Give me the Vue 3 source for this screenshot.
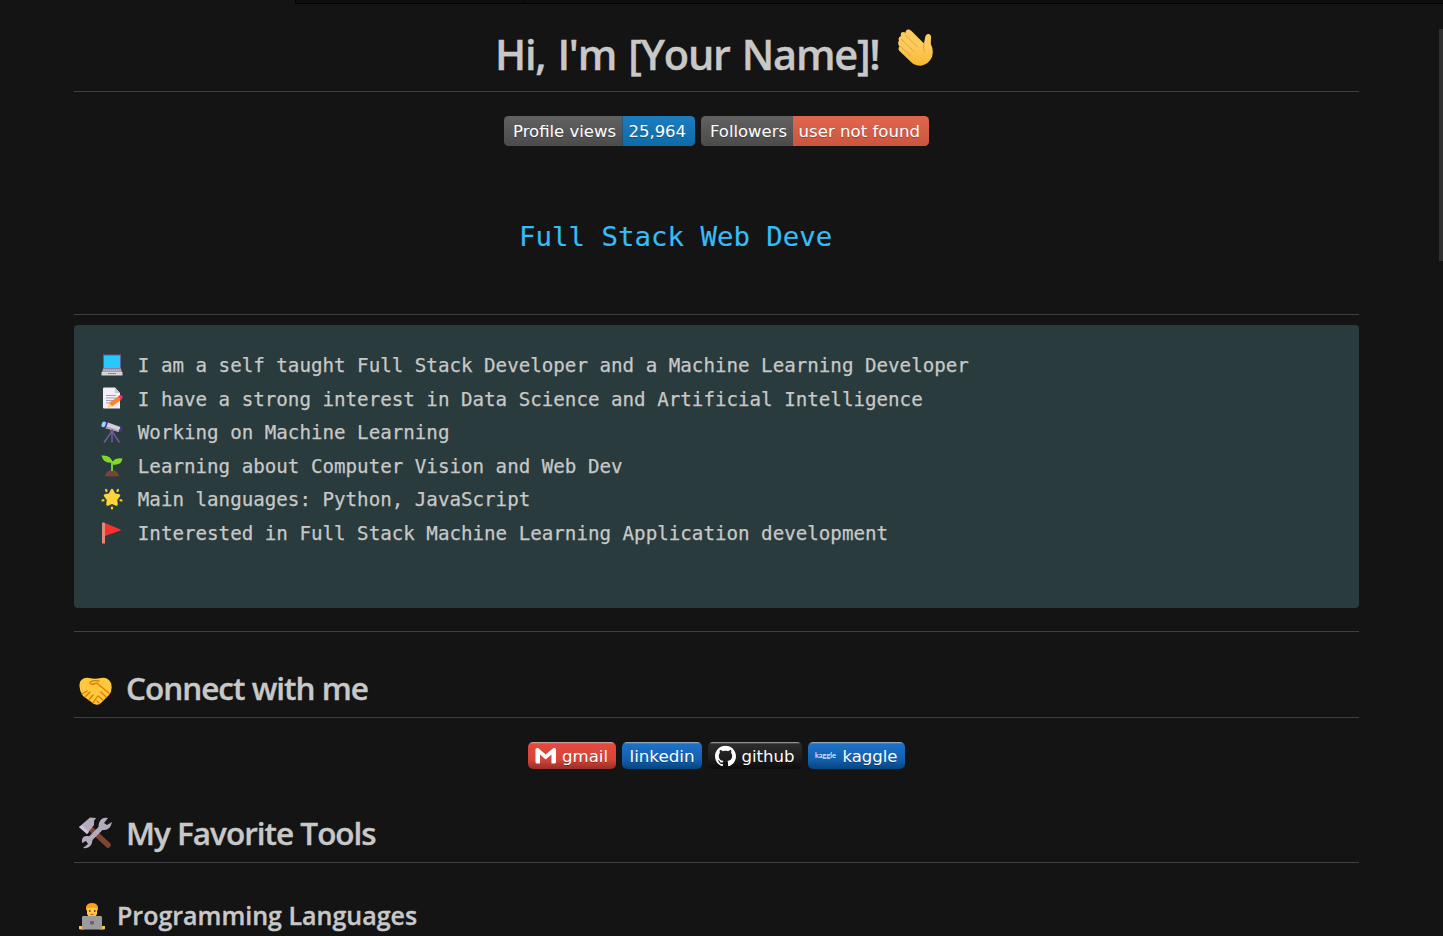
<script setup>
const facts = [
  { icon: 'laptop', text: 'I am a self taught Full Stack Developer and a Machine Learning Developer' },
  { icon: 'memo', text: 'I have a strong interest in Data Science and Artificial Intelligence' },
  { icon: 'scope', text: 'Working on Machine Learning' },
  { icon: 'plant', text: 'Learning about Computer Vision and Web Dev' },
  { icon: 'star', text: 'Main languages: Python, JavaScript' },
  { icon: 'flag', text: 'Interested in Full Stack Machine Learning Application development' },
]
const stats = [
  { label: 'Profile views', value: '25,964', width: 191, split: 118.5, lx: 9, lw: 103, vx: 124.5, vw: 57.5, top: '#1e7dbd', bottom: '#0d6ba8' },
  { label: 'Followers', value: 'user not found', width: 228, split: 92, lx: 9, lw: 77, vx: 97.5, vw: 121.5, top: '#e0674f', bottom: '#cb553e' },
]
const links = [
  { name: 'gmail', width: 88, x: 34, w: 46, top: '#e5493e', bottom: '#992e27', mid: '#d54439' },
  { name: 'linkedin', width: 80, x: 7.5, w: 65, top: '#1b70c8', bottom: '#07447f', mid: '#1260ad' },
  { name: 'github', width: 94, x: 33.5, w: 53, top: '#2b2b2b', bottom: '#0b0b0b', mid: '#1c1c1c' },
  { name: 'kaggle', width: 97, x: 34.5, w: 55, top: '#1b70c8', bottom: '#07447f', mid: '#1260ad' },
]
</script>

<template>
  <main class="page">
    <div class="tabs"><i></i><i></i></div>
    <article class="readme">
      <h1>
        <span>Hi, I'm [Your Name]!</span>
        <svg class="wave" viewBox="0 0 36 38">
          <defs>
            <linearGradient id="skin" x1="0" y1="0" x2="0" y2="1">
              <stop offset=".45" stop-color="#ffcb5f" /><stop offset="1" stop-color="#f5b72d" />
            </linearGradient>
          </defs>
          <path fill="url(#skin)" d="M3 7Q2 3 5.500 3Q6.500 3 7.500 4Q7.500 0 11 .5Q12.500 1 14 2.500L25.500 14Q26.500 14 26.500 11.500L27.500 7Q28.500 4.500 31 5Q33.500 5.500 33 9L32.800 15Q36 21 34 28Q31 35 23 36.800Q17 37 13 33L1.500 22Q-.5 19.500 1.500 17.500Q-1 14.500 1 11.500Q-.5 8.500 3 7Z" />
          <path fill="none" stroke="#e0a52f" stroke-width="1" stroke-linecap="round" d="M7.500 6L19.500 18M3.500 10.500L16 22.500M2.500 17.500L12 26.500M26 14.500Q24.500 18 26.500 23" />
        </svg>
      </h1>

      <div class="stats">
        <svg v-for="(b, i) in stats" :key="b.label" :width="b.width" height="30">
          <defs>
            <linearGradient :id="'sl' + i" x2="0" y2="1"><stop stop-color="#616161" /><stop offset="1" stop-color="#4b4b4b" /></linearGradient>
            <linearGradient :id="'sv' + i" x2="0" y2="1"><stop :stop-color="b.top" /><stop offset="1" :stop-color="b.bottom" /></linearGradient>
            <clipPath :id="'sc' + i"><rect :width="b.width" height="30" rx="4.500" /></clipPath>
          </defs>
          <g :clip-path="`url(#sc${i})`">
            <rect :width="b.split" height="30" :fill="`url(#sl${i})`" />
            <rect :x="b.split" :width="b.width - b.split" height="30" :fill="`url(#sv${i})`" />
          </g>
          <g class="badge-text">
            <text :x="b.lx" y="20.700" :textLength="b.lw" lengthAdjust="spacingAndGlyphs">{{ b.label }}</text>
            <text :x="b.vx" y="20.700" :textLength="b.vw" lengthAdjust="spacingAndGlyphs">{{ b.value }}</text>
          </g>
        </svg>
      </div>

      <div class="typing"><span>Full Stack Web Deve</span></div>
      <hr />

      <ul class="facts">
        <li v-for="f in facts" :key="f.icon">
          <svg class="emoji" viewBox="0 0 22 22">
            <template v-if="f.icon === 'laptop'">
              <path fill="#6a5b9b" d="M2 .5H20V15H2Z" /><path fill="#26c9fc" d="M3 1.500H19V14H3Z" /><path fill="#a7a0ad" d="M2 14.500H20L21 18H1Z" /><path fill="#d3d3d3" d="M.5 18H21.500V21.500H.5Z" /><path stroke="#c9c6cc" stroke-width="1" stroke-dasharray="1 1" d="M3 16H19" /><path stroke="#8d8d8d" d="M7 19.500H15" />
            </template>
            <template v-else-if="f.icon === 'memo'">
              <path fill="#f3eef8" d="M3 .5H14L19 6V21.500H3Q2 21.500 2 20.500V1.500Q2 .5 3 .5Z" /><path fill="#cdc4d6" d="M14 .5L19 6H14Z" /><path stroke="#a99cb5" d="M5 8.500H15M5 11H16M5 13.500H13M5 16H10" /><path fill="#ff822d" d="M8 16L17 9.500L20 13L11 19.500Z" /><path fill="#fcd27e" d="M8 16L11 19.500L6 21Z" /><path fill="#f92f60" d="M17 9.500Q19 7 21 8.500Q22.500 10.500 20 13Z" />
            </template>
            <template v-else-if="f.icon === 'scope'">
              <path fill="none" stroke="#6d5b9b" stroke-width="1.500" d="M10.500 11L3 21.500M11 11V21.500M11.500 11L18.500 21.500" /><path fill="#d3d0d5" d="M5.500 1L19.500 6L18 11L4 7Z" /><path fill="#a9a4ad" d="M4.500 5L18 9.500V11L4 7Z" /><path fill="#4b2fa0" d="M4 .5L7 1.500L5 7L2.500 6ZM19.500 6L21.500 7L20 11.500L17.500 10.500Z" /><ellipse cx="2.800" cy="3.500" rx="2" ry="3" fill="#8ed9f6" transform="rotate(20 3 3)" /><circle cx="11" cy="10" r="1.700" fill="#6d5b9b" />
            </template>
            <template v-else-if="f.icon === 'plant'">
              <path fill="#764538" d="M4 21.500Q5 15 11 15T18 21.500Z" /><path fill="none" stroke="#72cb28" stroke-width="2" d="M11 16V6" /><path fill="#83d927" d="M.5.5Q10-.5 11.500 7.500Q2.500 9 .5.5ZM11 9.500Q12 2 21.500 3.500Q20.500 11 11 9.500Z" />
            </template>
            <template v-else-if="f.icon === 'star'">
              <path fill="#ffd43b" stroke="#ffd43b" stroke-width="2.500" stroke-linejoin="round" d="M11 2L13.300 6.500L18 7.500L15 11.500L15.500 16.500L11 14.500L6.500 16.500L7 11.500L4 7.500L8.700 6.500Z" /><path stroke="#ffc928" stroke-width="2.200" stroke-linecap="round" d="M5 2L5.500 3M17 2L16.500 3M1.500 12.500L2.500 12.200M20.500 12.500L19.500 12.200M11 19.500V20.500" />
            </template>
            <template v-else>
              <path fill="#dc8b7b" d="M1 1Q2.500-.5 4 1V21.500H1Z" /><path fill="#f8312f" d="M4 1L19.500 7.500Q20 8 19.500 8.500L4 14Z" />
            </template>
          </svg>
          <span>{{ f.text }}</span>
        </li>
      </ul>
      <hr />

      <h2 class="connect">
        <svg viewBox="0 0 33 28">
          <path fill="#ffc83d" d="M1 5Q4 0 10 1Q16 2.500 22 1Q29 0 32 6Q34 13 30 18L22 26Q19 29 15 27L4 19Q-1 12 1 5Z" />
          <path fill="none" stroke="#d67d00" stroke-width="1.300" stroke-linecap="round" stroke-linejoin="round" d="M20 4Q15 3 11 5Q11 8 15 7Q18 5 20 8L30 16M3 17L8 14M6 20L11 15M10 23L14 18M14 26L18 20M22 15L27 20M19 19L24 23M18 24L20 26" />
        </svg>
        <span>Connect with me</span>
      </h2>

      <div class="links">
        <svg v-for="(b, i) in links" :key="b.name" :width="b.width" height="27">
          <defs>
            <linearGradient :id="'lk' + i" x2="0" y2="1">
              <stop stop-color="#b8b8b8" /><stop offset=".07" :stop-color="b.top" /><stop offset=".1" :stop-color="b.top" /><stop offset=".65" :stop-color="b.mid" /><stop offset="1" :stop-color="b.bottom" />
            </linearGradient>
          </defs>
          <rect :width="b.width" height="27" rx="5" :fill="`url(#lk${i})`" />
          <path v-if="b.name === 'gmail'" fill="#fff" d="M7.500 7.500Q7.500 6 9 6H10L17.700 12.500L25.500 6H26.500Q28 6 28 7.500V20Q28 21.500 26.500 21.500H23.500V12.500L17.700 17.500L12 12.500V21.500H9Q7.500 21.500 7.500 20Z" />
          <svg v-if="b.name === 'github'" x="7" y="3.500" width="21" height="21" viewBox="0 0 24 24">
            <path fill="#fff" d="M12 .297c-6.630 0-12 5.373-12 12 0 5.303 3.438 9.800 8.205 11.385.6.113.82-.258.82-.577 0-.285-.01-1.040-.015-2.040-3.338.724-4.042-1.610-4.042-1.610C4.422 18.070 3.633 17.700 3.633 17.700c-1.087-.744.084-.729.084-.729 1.205.084 1.838 1.236 1.838 1.236 1.070 1.835 2.809 1.305 3.495.998.108-.776.417-1.305.760-1.605-2.665-.3-5.466-1.332-5.466-5.930 0-1.310.465-2.380 1.235-3.220-.135-.303-.54-1.523.105-3.176 0 0 1.005-.322 3.300 1.230.96-.267 1.980-.399 3-.405 1.020.006 2.040.138 3 .405 2.280-1.552 3.285-1.230 3.285-1.230.645 1.653.24 2.873.12 3.176.765.840 1.230 1.910 1.230 3.220 0 4.610-2.805 5.625-5.475 5.920.42.360.810 1.096.810 2.220 0 1.606-.015 2.896-.015 3.286 0 .315.210.690.825.570C20.565 22.092 24 17.592 24 12.297c0-6.627-5.373-12-12-12" />
          </svg>
          <text v-if="b.name === 'kaggle'" class="tiny" x="7" y="16" textLength="21" lengthAdjust="spacingAndGlyphs">kaggle</text>
          <text class="badge-text" :x="b.x" y="19.700" :textLength="b.w" lengthAdjust="spacingAndGlyphs">{{ b.name }}</text>
        </svg>
      </div>

      <h2 class="tools">
        <svg viewBox="0 0 33 32">
          <path stroke="#7d4533" stroke-width="5.500" stroke-linecap="round" d="M13 13L29 28" />
          <path fill="#b4acbc" d="M0 10L11 .5L17 1L15 4V8L8 17Z" /><path fill="#cdc4d6" d="M0 10L3 8L10 15L8 17Z" />
          <path stroke="#b4acbc" stroke-width="5" d="M9 24L25 8" />
          <path fill="#b4acbc" d="M29 1Q22 0 20 6T24 13Q31 14 33 5L28 8L25 6ZM4 31Q11 32 13 26T9 19Q2 18 3 26L7 24L9 27Z" />
        </svg>
        <span>My Favorite Tools</span>
      </h2>

      <h3>
        <svg viewBox="0 0 26 27">
          <path fill="#f9c23c" d="M0 23H5V26.500H1Q0 26.500 0 25.500ZM21 23H26V25.500Q26 26.500 25 26.500H21Z" />
          <path fill="#ffc83d" d="M8 4H18V11Q16 15 13 15T8 11Z" /><path fill="#ff9c1f" d="M7 8V4Q8 0 13 0T19 4V8L17.500 5.500Q13 3.500 8.500 5.500Z" />
          <path fill="#614a75" d="M10 7H11.500V9H10ZM15 7H16.500V9H15Z" /><path stroke="#e64b36" stroke-width="1.200" d="M11.500 11.500H14.500" />
          <path fill="#9b9b9b" d="M4 13H22Q23 13 23 14V26.500H3V14Q3 13 4 13Z" /><rect x="11" y="18" width="4" height="3.500" rx="1" fill="#705b7d" />
        </svg>
        <span>Programming Languages</span>
      </h3>
    </article>
    <div class="scroll"></div>
  </main>
</template>

<style>
html, body { margin: 0; background: #141414; overflow: hidden; }
</style>

<style scoped>
.page { position: relative; width: 1443px; height: 936px; overflow: hidden; background: #141414; color: #c8c8c8; font-family: "Open Sans", "Noto Sans", sans-serif; }
.tabs { display: flex; box-sizing: border-box; height: 4px; margin-left: 295px; border-left: 1px solid #020202; border-bottom: 1px solid #020202; background: #0e0e0e; }
.tabs i:first-child { width: 228px; border-right: 1px solid #020202; }
.readme { padding: 0 84px 0 74px; }
h1, h2, h3 { display: flex; box-sizing: border-box; margin: 0; font-weight: 600; white-space: nowrap; -webkit-text-stroke: .35px #c8c8c8; }
h1 svg, h2 svg, h3 svg { flex: none; }
h1 { height: 88px; padding: 20.500px 0 0 421px; border-bottom: 1px solid #404040; font-size: 41.500px; line-height: 58px; }
h1 span { width: 402.500px; letter-spacing: -1.250px; word-spacing: 2.600px; }
.wave { width: 36px; height: 38px; margin-top: 4.500px; }
.stats { display: flex; justify-content: center; gap: 6px; margin-top: 24px; height: 30px; }
.badge-text { fill: #fff; font: 16.500px "DejaVu Sans", sans-serif; text-shadow: 0 1.500px 0 rgba(1, 1, 1, .3); }
.tiny { fill: #fff; font: 8px Lato, sans-serif; }
.typing { height: 168px; padding: 71px 0 0 445px; box-sizing: border-box; color: #36bcf7; font: 27.400px/40px "DejaVu Sans Mono", monospace; white-space: pre; -webkit-text-stroke: .15px #36bcf7; }
hr { height: 1px; margin: 0; border: 0; background: #404040; }
.facts { box-sizing: border-box; height: 283px; margin: 10px 0 23px; padding: 24px 26.500px 0; border-radius: 4px; background: #293b3d; list-style: none; font: 19.180px/33.600px "DejaVu Sans Mono", monospace; -webkit-text-stroke: .25px #c8c8c8; }
.facts li { display: flex; height: 33.600px; white-space: pre; }
.emoji { flex: none; width: 22px; height: 22px; margin: 4.800px 14.800px 0 .5px; overflow: visible; -webkit-text-stroke: 0; }
h2 { padding: 31px 0 0 5px; border-bottom: 1px solid #404040; font-size: 31.500px; line-height: 50px; letter-spacing: -1px; }
h2.connect { height: 86px; }
h2.connect svg { width: 33px; height: 28px; margin: 14px 14px 0 0; }
h2.tools { height: 94px; padding-top: 39px; }
h2.tools svg { width: 33px; height: 32px; margin: 9px 14px 0 0; }
.links { display: flex; justify-content: center; gap: 6px; height: 27px; margin-top: 24px; }
h3 { padding: 35px 0 0 5px; font-size: 25px; line-height: 34px; }
h3 svg { width: 26px; height: 27px; margin: 4.500px 12px 0 0; }
.scroll { position: absolute; right: 0; top: 29px; width: 4px; height: 232px; background: #303030; }
</style>
